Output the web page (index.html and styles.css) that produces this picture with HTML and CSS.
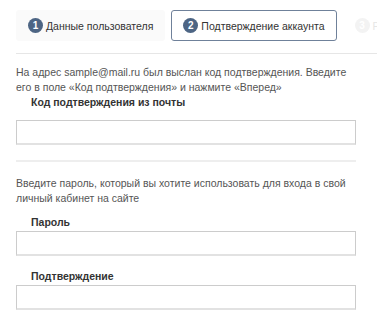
FILE: index.html
```html
<!DOCTYPE html>
<html lang="ru">
<head>
  <meta charset="UTF-8">
  <title>Регистрация</title>
  <link rel="stylesheet" href="styles.css">
</head>
<body>
  <nav class="steps">
    <div class="step"><span class="num">1</span>Данные пользователя</div>
    <div class="step active"><span class="num">2</span>Подтверждение аккаунта</div>
    <div class="step todo"><span class="num">3</span>Регистрация завершена</div>
  </nav>

  <form class="form">
    <section class="block">
      <p class="note">На адрес sample@mail.ru был выслан код подтверждения. Введите его в поле «Код подтверждения» и нажмите «Вперед»</p>
      <div class="field first">
        <label class="label" for="code">Код подтверждения из почты</label>
        <input class="input" id="code" type="text">
      </div>
    </section>

    <section class="block">
      <p class="note">Введите пароль, который вы хотите использовать для входа в свой личный кабинет на сайте</p>
      <div class="field">
        <label class="label" for="pass">Пароль</label>
        <input class="input" id="pass" type="password">
      </div>
      <div class="field">
        <label class="label" for="pass2">Подтверждение</label>
        <input class="input" id="pass2" type="password">
      </div>
    </section>
  </form>
</body>
</html>
```

FILE: styles.css
```css
:root {
  --slate: #4d6584;
  --text: #555555;
  --dark: #333333;
}

* {
  margin: 0;
  padding: 0;
  box-sizing: border-box;
}

body {
  font-family: 'Liberation Sans', Arial, sans-serif;
  font-size: 10.5px;
  color: var(--text);
  background: #ffffff;
  overflow: hidden;
}

.steps {
  display: flex;
  gap: 6px;
  margin: 0 6px 0 16px;
  padding: 10px 0 12px;
  border-bottom: 1px solid #e6e6e6;
  white-space: nowrap;
  overflow: hidden;
}

.step {
  display: flex;
  align-items: center;
  gap: 3px;
  flex-shrink: 0;
  height: 31px;
  padding: 0 12px;
  background: #fafafa;
  border-radius: 3px;
  color: var(--dark);
}

.step.active {
  background: #ffffff;
  border: 1px solid #6f819a;
  padding: 0 11px;
}

.step.todo {
  background: #ffffff;
  color: #e6e6e6;
}

.num {
  display: flex;
  align-items: center;
  justify-content: center;
  width: 15px;
  height: 15px;
  border-radius: 50%;
  background: var(--slate);
  color: #ffffff;
  font-size: 10px;
  font-weight: 700;
}

.step.todo .num {
  background: #f3f3f3;
}

.form {
  padding: 0 27px 0 16px;
}

.block {
  padding: 11px 0 15px;
}

.block + .block {
  border-top: 2px solid #eeeeee;
  padding-top: 14px;
}

.note {
  line-height: 15px;
}

.field {
  display: flex;
  flex-direction: column;
  margin-top: 9px;
}

.field + .field {
  margin-top: 13px;
}

.field.first {
  margin-top: 0;
}

.label {
  padding-left: 15px;
  line-height: 15px;
  font-weight: 700;
  color: var(--dark);
  margin-bottom: 1px;
}

.field.first .label {
  margin-bottom: 10px;
}

.input {
  height: 25px;
  width: 100%;
  border: 1px solid #cccccc;
  border-bottom: 2px solid #e2e2e2;
  background: #ffffff;
  font: inherit;
}
```
